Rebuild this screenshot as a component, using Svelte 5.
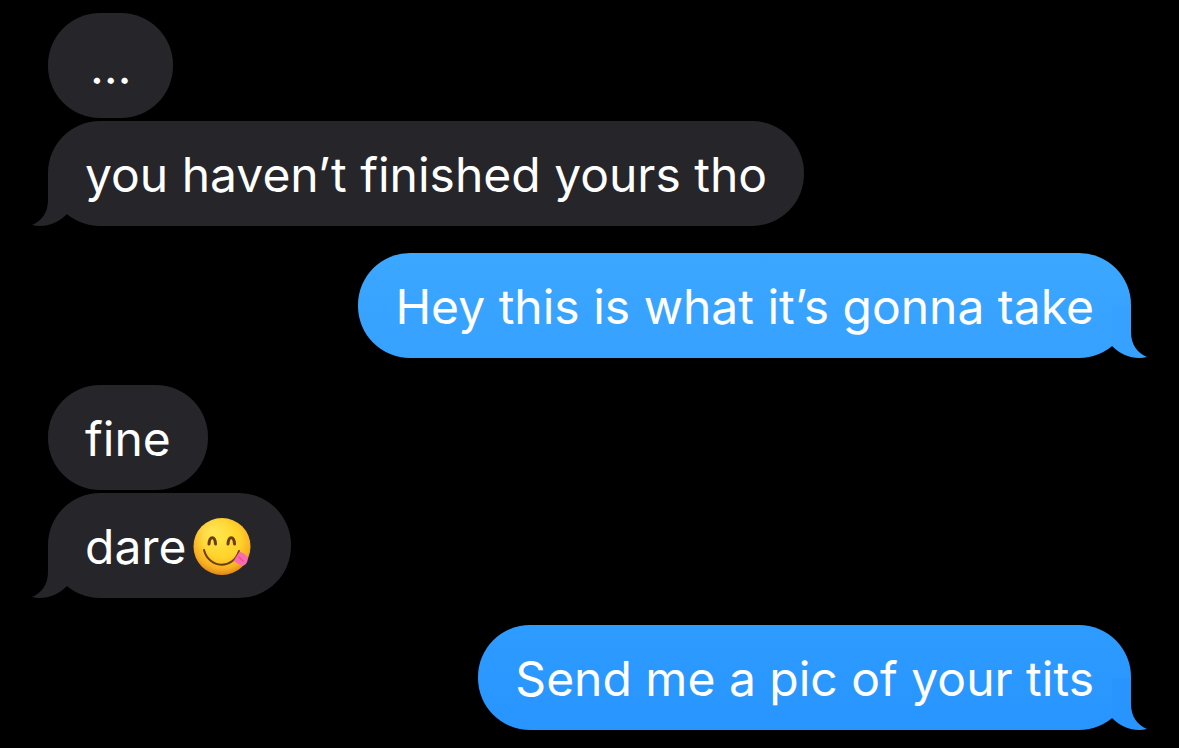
<script lang="ts">
  type Message = { text: string; emoji?: boolean; tone?: string };
  type Group = { from: 'them' | 'me'; messages: Message[] };

  const groups: Group[] = [
    { from: 'them', messages: [{ text: '…', tone: 'short' }, { text: 'you haven’t finished yours tho' }] },
    { from: 'me', messages: [{ text: 'Hey this is what it’s gonna take', tone: 'light' }] },
    { from: 'them', messages: [{ text: 'fine' }, { text: 'dare', emoji: true }] },
    { from: 'me', messages: [{ text: 'Send me a pic of your tits', tone: 'deep' }] }
  ];
</script>

<main class="thread">
  {#each groups as group}
    <section class="group {group.from}">
      {#each group.messages as message, i}
        <div class="bubble {message.tone ?? ''}">
          <span>{message.text}</span>
          {#if message.emoji}
            <svg class="emoji" viewBox="-1 0 62 58" role="img" aria-label="Face savoring food">
              <defs>
                <radialGradient id="face" cx="50%" cy="38%" r="64%">
                  <stop offset="0" stop-color="#ffe135" />
                  <stop offset="0.5" stop-color="#ffd32c" />
                  <stop offset="0.8" stop-color="#f8b022" />
                  <stop offset="1" stop-color="#dd7f18" />
                </radialGradient>
                <radialGradient id="shine" cx="32%" cy="24%" r="40%">
                  <stop offset="0" stop-color="#fff07a" stop-opacity="0.5" />
                  <stop offset="1" stop-color="#fff07a" stop-opacity="0" />
                </radialGradient>
              </defs>
              <circle cx="29" cy="28.500" r="28.500" fill="url(#face)" />
              <circle cx="29" cy="28.500" r="28.500" fill="url(#shine)" />
              <g fill="none" stroke="#6b3d08" stroke-linecap="round">
                <path d="M16 26C16.500 17.500 22 17.500 22.500 26" stroke-width="3" />
                <path d="M35 26C35.500 17.500 41 17.500 41.500 26" stroke-width="3" />
                <path d="M11 32C16 51 40 52 46 33" stroke-width="2" />
              </g>
              <path d="M40.500 43L46.500 33.500C50 35 55 37.500 54.800 41C54.500 45 51.500 48.500 48 47.500Z" fill="#fb6aae" />
              <path d="M46 39L50 43" stroke="#e8509c" stroke-width="1.500" stroke-linecap="round" />
            </svg>
          {/if}
          {#if i === group.messages.length - 1}
            <svg class="tail" viewBox="0 0 36 53" aria-hidden="true">
              <path d="M17 0V26C17 38 11 47 1 51C13 54 26 50 36 40V0Z" />
            </svg>
          {/if}
        </div>
      {/each}
    </section>
  {/each}
</main>

<style>
  :global(body) {
    background: #000;
  }

  .thread {
    display: flex;
    flex-direction: column;
    gap: 27px;
    padding: 13px 48px 18px;
    color: #fff;
    font-family: Inter, 'Liberation Sans', sans-serif;
    font-size: 48px;
    line-height: 61px;
  }

  .group {
    display: flex;
    flex-direction: column;
    align-items: flex-start;
    gap: 3px;
    --fill: #26252a;
  }

  .me {
    align-items: flex-end;
    --fill: #37a3ff;
  }

  .bubble {
    position: relative;
    display: flex;
    align-items: center;
    gap: 5px;
    padding: 23px 37px 21px;
    border-radius: 52px;
    background: var(--fill);
  }

  .short {
    padding-inline: 42px;
  }

  .light {
    background: linear-gradient(#3ba7ff, #36a1ff);
    --fill: #36a1ff;
  }

  .deep {
    background: linear-gradient(#2d9bff, #2895ff);
    --fill: #2895ff;
  }

  .emoji {
    width: 62px;
    height: 58px;
  }

  /* the tail hangs outside the bubble's bottom corner */
  .tail {
    position: absolute;
    bottom: -1px;
    left: -17px;
    width: 36px;
    height: 53px;
    fill: var(--fill);
  }

  .me .tail {
    left: auto;
    right: -17px;
    transform: scaleX(-1);
  }
</style>
